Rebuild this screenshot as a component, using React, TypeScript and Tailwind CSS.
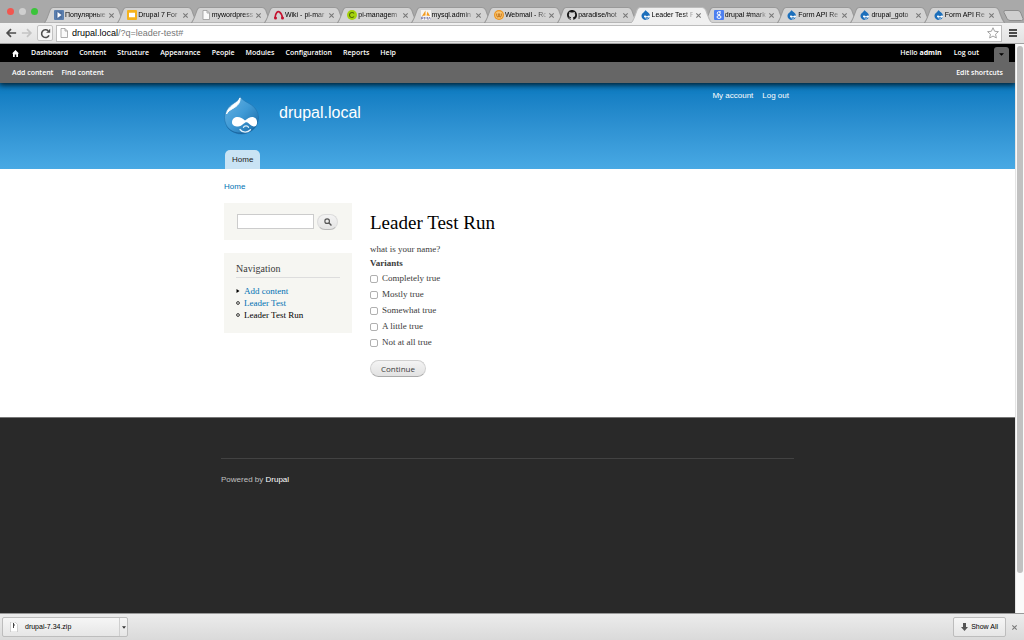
import type { ReactNode } from "react";

const sans = "font-['Liberation_Sans',Arial,sans-serif]";
const serif = "font-['Liberation_Serif',Georgia,serif]";
const lucida = "font-['Open_Sans','Noto_Sans',sans-serif]";

function DropFavicon() {
  return (
    <svg viewBox="0 0 20 20" className="size-[10px]">
      <path d="M9 0c1 3 9 5 9 12a8.500 8 0 0 1-17 0C1 6 8 4 9 0z" fill="#1c6fbb" />
      <path d="M6 13c0-3 4-2 6 0 2-2 6-3 6 0s-4 3-6 1c-2 2-6 2-6-1z" fill="#fff" />
      <path d="M9 17.500q3 1.500 5 0" stroke="#fff" strokeWidth="1.500" fill="none" />
    </svg>
  );
}

function PageIcon() {
  return (
    <svg viewBox="0 0 20 20" className="size-[10px]">
      <path d="M4 1h8l5 5v13H4z" fill="#fafafa" stroke="#9a9a9a" strokeWidth="1.6" />
      <path d="M12 1v5h5" fill="none" stroke="#9a9a9a" strokeWidth="1.6" />
    </svg>
  );
}

const icons: Record<string, ReactNode> = {
  video: (
    <svg viewBox="0 0 20 20" className="size-[10px]">
      <rect width="20" height="20" rx="2" fill="#5b7fae" />
      <rect x="4" y="3" width="12" height="14" fill="#4d6f9e" />
      <path d="M7 4l8 6-8 6z" fill="#fff" />
    </svg>
  ),
  slides: (
    <svg viewBox="0 0 20 20" className="size-[10px]">
      <rect width="20" height="20" rx="2" fill="#f5b21b" />
      <rect x="4" y="5.5" width="12" height="9" fill="#fff" />
    </svg>
  ),
  page: <PageIcon />,
  wiki: (
    <svg viewBox="0 0 20 20" className="size-[10px]">
      <path d="M2 16C3 4 8 2 11 4s5 6 6 12" fill="none" stroke="#c4122f" strokeWidth="3.2" />
      <circle cx="3" cy="16" r="3" fill="#c4122f" />
      <circle cx="17" cy="16" r="3" fill="#c4122f" />
    </svg>
  ),
  pi: (
    <svg viewBox="0 0 20 20" className="size-[10px]">
      <circle cx="10" cy="10" r="10" fill="#a5d20d" />
      <path d="M14 7a5 5 0 1 0 0 6" fill="none" stroke="#4f6a05" strokeWidth="2.2" />
    </svg>
  ),
  mysql: (
    <svg viewBox="0 0 20 20" className="size-[10px]">
      <rect width="20" height="20" fill="#f6f4f2" />
      <path d="M2 12l7-11v10zM11 11l2-8 5 9z" fill="#f39a1e" />
      <path d="M1 19v-5h3v3H1M7 19v-5l3 3 3-3v5M15 19l2-5 2 5" fill="none" stroke="#6b6fa8" strokeWidth="1.4" />
    </svg>
  ),
  mail: (
    <svg viewBox="0 0 20 20" className="size-[10px]">
      <circle cx="10" cy="10" r="10" fill="#ec951f" />
      <circle cx="10" cy="10" r="7.500" fill="#f9c674" />
      <path d="M5.500 7v4q0 3 2.300 3t2.200-3V7v4q0 3 2.300 3t2.200-3V7" fill="none" stroke="#b8650a" strokeWidth="1.8" />
    </svg>
  ),
  octocat: (
    <svg viewBox="0 0 16 16" className="size-[10px]">
      <path
        d="M8 0C3.58 0 0 3.58 0 8c0 3.54 2.29 6.53 5.47 7.59.4.07.55-.17.55-.38v-1.49c-2.01.37-2.53-.49-2.69-.94-.09-.23-.48-.94-.82-1.13-.28-.15-.68-.52-.01-.53.63-.01 1.08.58 1.23.82.72 1.21 1.87.87 2.33.66.07-.52.28-.87.51-1.07-1.78-.2-3.64-.89-3.64-3.95 0-.87.31-1.59.82-2.15-.08-.2-.36-1.02.08-2.12 0 0 .67-.21 2.2.82a7.6 7.6 0 0 1 4 0c1.53-1.04 2.2-.82 2.2-.82.44 1.1.16 1.92.08 2.12.51.56.82 1.27.82 2.15 0 3.07-1.87 3.75-3.65 3.95.29.25.54.73.54 1.48v2.2c0 .21.15.46.55.38A8 8 0 0 0 16 8c0-4.42-3.58-8-8-8z"
        fill="#151515"
      />
    </svg>
  ),
  drop: <DropFavicon />,
  search: (
    <svg viewBox="0 0 20 20" className="size-[10px]">
      <rect width="20" height="20" rx="2" fill="#4c7ff0" />
      <circle cx="9.5" cy="6.5" r="3" fill="none" stroke="#fff" strokeWidth="2" />
      <ellipse cx="10" cy="14" rx="4" ry="2.8" fill="none" stroke="#fff" strokeWidth="2" />
      <path d="M10 3.500h4M10 9l1 3" stroke="#fff" strokeWidth="1.600" />
    </svg>
  ),
};

const tabs = [
  { icon: "video", title: "Популярные" },
  { icon: "slides", title: "Drupal 7 For" },
  { icon: "page", title: "mywordpress" },
  { icon: "wiki", title: "Wiki - pi-mar" },
  { icon: "pi", title: "pi-managem" },
  { icon: "mysql", title: "mysql.admin" },
  { icon: "mail", title: "Webmail - Ro" },
  { icon: "octocat", title: "paradise/hot" },
  { icon: "drop", title: "Leader Test F", active: true },
  { icon: "search", title: "drupal #mark" },
  { icon: "drop", title: "Form API Re" },
  { icon: "drop", title: "drupal_goto" },
  { icon: "drop", title: "Form API Re" },
];

function CloseIcon() {
  return (
    <svg viewBox="0 0 8 8" className="size-[7px]">
      <path d="M1.500 1.500l5 5M6.500 1.500l-5 5" stroke="#777" strokeWidth="1.200" />
    </svg>
  );
}

function BrowserTab({ icon, title, active }: { icon: string; title: string; active?: boolean }) {
  return (
    <div className={`relative flex h-4 min-w-0 flex-1 items-center ${active ? "z-10" : ""}`}>
      <svg
        viewBox="0 0 80 16"
        preserveAspectRatio="none"
        className="absolute inset-y-0 -left-1 h-4 w-[calc(100%+8px)]"
      >
        <path
          d="M0 16C2 15 2.500 13 6 3Q7 .5 9 .5H70Q72 .5 73.500 3C77 13 78 15 80 16z"
          fill={active ? "#f0f0f0" : "#d3d3d3"}
          stroke={active ? "#bcbcbc" : "#999"}
          strokeWidth="1"
        />
        {active && <path d="M1 16H79" stroke="#f0f0f0" strokeWidth="2" />}
      </svg>
      <a href="#" className="relative ml-1.5 flex min-w-0 flex-1 items-center gap-px">
        <span className="shrink-0">{icons[icon]}</span>
        <span className="min-w-0 flex-1 text-[7px] leading-3 whitespace-nowrap text-black [mask-image:linear-gradient(to_right,black_75%,rgba(0,0,0,0.2))]">
          {title}
        </span>
      </a>
      <button aria-label="Close tab" className="relative mr-1.5 ml-0.5 shrink-0">
        <CloseIcon />
      </button>
    </div>
  );
}

function BrowserChrome() {
  return (
    <div className={sans}>
      <div className="flex h-[23px] items-end bg-[#a9a9a9] pt-[7px]">
        <div className="mb-2 ml-[7px] flex w-[41px] shrink-0 gap-[5px]">
          <span className="size-[7px] rounded-full bg-[#f2564f]" />
          <span className="size-[7px] rounded-full bg-[#cfcfcf]" />
          <span className="size-[7px] rounded-full bg-[#3ac43a]" />
        </div>
        <div className="flex min-w-0 flex-1">
          {tabs.map((t, i) => (
            <BrowserTab key={i} {...t} />
          ))}
        </div>
        <button aria-label="New tab" className="mb-0.5 ml-0.5 w-[21px] shrink-0">
          <svg viewBox="0 0 21 11" className="h-[11px] w-[21px]">
            <path d="M2 .5h13q2 0 3 3l2 5q.5 2-1.500 2H7q-2 0-3-2L1 2.500Q.5.5 2 .5z" fill="#cfcfcf" stroke="#8c8c8c" />
          </svg>
        </button>
      </div>
      <div className="flex h-[21px] items-center border-b border-[#a0a0a0] bg-linear-to-b from-[#f0f0f0] to-[#e2e2e2] pr-[7px] pl-[5px]">
        <button aria-label="Back" className="w-4">
          <svg viewBox="0 0 14 14" className="size-3">
            <path d="M13 7H3M7 2.500L2.500 7 7 11.500" fill="none" stroke="#4d4d4d" strokeWidth="2" />
          </svg>
        </button>
        <button aria-label="Forward" className="w-4">
          <svg viewBox="0 0 14 14" className="size-3">
            <path d="M1 7h10M7 2.500L11.500 7 7 11.500" fill="none" stroke="#c3c3c3" strokeWidth="2" />
          </svg>
        </button>
        <button
          aria-label="Reload"
          className="flex h-4 w-4 items-center justify-center rounded-[2px] border border-[#c2c2c2] bg-[#f5f5f5]"
        >
          <svg viewBox="0 0 14 14" className="size-[11px]">
            <path d="M11.500 9.500A5 5 0 1 1 10.500 3.500" fill="none" stroke="#4d4d4d" strokeWidth="2" />
            <path d="M13 .8V6H7.800z" fill="#4d4d4d" />
          </svg>
        </button>
        <div className="ml-[3px] flex h-[17px] min-w-0 flex-1 items-center border border-[#bdbdbd] bg-white pr-0.5 pl-0.5">
          <PageIcon />
          <div className="ml-[3px] flex-1 text-[9px] leading-3 text-[#777]">
            <span className="text-black">drupal.local</span>/?q=leader-test#
          </div>
          <button aria-label="Bookmark">
            <svg viewBox="0 0 24 24" className="size-3">
              <path
                d="M12 1.500l3.200 7 7.600.8-5.700 5.100 1.600 7.500L12 18.100l-6.700 3.800 1.600-7.500L1.200 9.300l7.600-.8z"
                fill="#fff"
                stroke="#999"
                strokeWidth="1.800"
              />
            </svg>
          </button>
        </div>
        <button aria-label="Menu" className="ml-[7px] flex flex-col gap-px">
          <span className="h-0.5 w-2 bg-[#4a4a4a]" />
          <span className="h-0.5 w-2 bg-[#4a4a4a]" />
          <span className="h-0.5 w-2 bg-[#4a4a4a]" />
        </button>
      </div>
    </div>
  );
}

const adminLinks = [
  "Dashboard",
  "Content",
  "Structure",
  "Appearance",
  "People",
  "Modules",
  "Configuration",
  "Reports",
  "Help",
];

function AdminToolbar() {
  return (
    <nav className={`relative text-[7px] leading-[10px] font-semibold text-white ${lucida}`}>
      <div className="flex h-[18px] items-center bg-black pl-3">
        <a href="#" aria-label="Home" className="mr-3">
          <svg viewBox="0 0 14 14" className="size-[7px]">
            <path d="M7 0L0 7h2v7h3.500V9h3v5H12V7h2z" fill="#fff" />
          </svg>
        </a>
        <div className="flex flex-1 gap-[11px]">
          {adminLinks.map((l) => (
            <a key={l} href="#">
              {l}
            </a>
          ))}
        </div>
        <div className="flex gap-3">
          <a href="#">
            Hello <span className="font-bold">admin</span>
          </a>
          <a href="#">Log out</a>
        </div>
        <button
          aria-label="Toggle shortcuts"
          className="mr-1.5 ml-[15px] flex h-[15px] w-[15px] items-center justify-center self-end rounded-t-[3px] bg-[#666]"
        >
          <svg viewBox="0 0 6 3" className="h-[3px] w-[5px]">
            <path d="M0 0h6L3 3z" fill="#000" />
          </svg>
        </button>
      </div>
      <div className="flex h-[21px] items-center justify-between bg-[#666] pr-3 pl-3 shadow-[0_1px_6px_1px_rgba(0,0,0,0.8)]">
        <div className="flex gap-2">
          <a href="#">Add content</a>
          <a href="#">Find content</a>
        </div>
        <a href="#">Edit shortcuts</a>
      </div>
    </nav>
  );
}

function Druplicon() {
  return (
    <svg viewBox="0 0 36 40" className="h-10 w-9">
      <defs>
        <linearGradient id="body" x1="0" y1="0" x2="1" y2="1">
          <stop offset="0" stopColor="#6bb4e2" />
          <stop offset=".5" stopColor="#3f9ad6" />
          <stop offset="1" stopColor="#1767a3" />
        </linearGradient>
      </defs>
      <path
        d="M16 .5c1.500 4.500 6 6 10 8.500 5 3 8.500 8 8.500 13.500C34.500 32 27 39 17.500 39S.5 32 .5 22.500C.5 16 4 11.500 8.500 8.500c3.500-2.300 6.500-4 7.500-8z"
        fill="url(#body)"
        stroke="#2377b3"
        strokeWidth=".7"
      />
      <path d="M34 20c1 9-6 17-16 17.500C11 38 5 35 2 30c2 5.500 8.500 9 15.500 9C27 39 36 31 34 20z" fill="#145d95" opacity=".7" />
      <path d="M16 3c.3 4-1.500 7-5.500 9.500C7 14.500 4 16 2.500 19c.5-4 3.500-7 7-9.500C12.500 7.500 15 6 16 3z" fill="#fff" stroke="#fff" strokeWidth="1" />
      <path
        d="M8 27.500C8 23.800 10.800 22 13.500 22c3 0 5 1.500 7.500 3.500 2.500-2 5.500-4 8-3.500 3 .6 4.500 3.500 4 6.500-.4 2.500-2 3.500-4 2.800-2.500-.8-4.500-3.300-6-4-1.500-.3-2 .3-3.500 1.500-1.600 1.500-3.500 2.700-5.500 2.700-3.500 0-6-1.500-6-4z"
        fill="#fff"
      />
      <path
        d="M19.500 32.300c.8-1.800 4.200-2 5 0M16 34.500c2.500 3.500 7.500 3.500 10.500.3"
        fill="none"
        stroke="#e3f2fb"
        strokeWidth="1.300"
        strokeLinecap="round"
      />
    </svg>
  );
}

function SiteHeader() {
  return (
    <header className={`bg-linear-to-b from-[#0779bf] to-[#48a9e4] ${sans}`}>
      <div className="mx-auto max-w-[573px]">
        <div className="flex h-[67px] items-start px-[3px] pr-[5px]">
          <a href="#" aria-label="Site home" className="mt-3">
            <Druplicon />
          </a>
          <h1 className="mt-5 ml-[19px] flex-1 text-[16px] leading-5 text-white">
            <a href="#">drupal.local</a>
          </h1>
          <div className="mt-[7px] flex gap-[9px] text-[8px] leading-[11px] text-white">
            <a href="#">My account</a>
            <a href="#">Log out</a>
          </div>
        </div>
        <div className="flex pl-1">
          <a href="#" className="rounded-t-[5px] bg-[#c9e3f4] px-[7px] pt-1 pb-[3px] text-[8px] leading-3 text-[#222]">
            Home
          </a>
        </div>
      </div>
    </header>
  );
}

function NavItem({ marker, children, current }: { marker: "arrow" | "ring"; children: string; current?: boolean }) {
  return (
    <li className="flex items-center gap-1">
      <svg viewBox="0 0 8 8" className="size-1">
        {marker === "arrow" ? (
          <path d="M1 0l6 4-6 4z" fill="#000" />
        ) : (
          <circle cx="4" cy="4" r="2.800" fill="none" stroke="#222" strokeWidth="1.800" />
        )}
      </svg>
      <a href="#" className={current ? "text-black" : "text-[#0071b3]"}>
        {children}
      </a>
    </li>
  );
}

const variants = ["Completely true", "Mostly true", "Somewhat true", "A little true", "Not at all true"];

function MainContent() {
  return (
    <div className="mx-auto w-full max-w-[573px] px-[3px] pb-10">
      <div className={`pt-3 text-[8px] leading-3 ${sans}`}>
        <a href="#" className="text-[#0071b3]">
          Home
        </a>
      </div>
      <div className={`mt-[10px] flex items-start gap-[18px] text-[9px] text-[#3b3b3b] ${serif}`}>
        <aside className="flex w-32 shrink-0 flex-col gap-[13px]">
          <form className="flex h-[37px] items-center gap-[3px] bg-[#f6f6f2] px-[13px]">
            <input
              type="search"
              aria-label="Search"
              className="h-[15px] w-[77px] border border-[#ccc] bg-white px-1 outline-none"
            />
            <button
              type="button"
              aria-label="Search"
              className="flex h-4 w-[21px] items-center justify-center rounded-full border border-[#dcdcdc] border-b-[#b9b9b9] bg-linear-to-b from-[#f4f4f4] to-[#e4e4e4]"
            >
              <svg viewBox="0 0 14 14" className="size-2">
                <circle cx="5.500" cy="5.500" r="4" fill="none" stroke="#555" strokeWidth="2" />
                <path d="M8.500 8.500L13 13" stroke="#555" strokeWidth="2.400" />
              </svg>
            </button>
          </form>
          <section className="bg-[#f6f6f2] px-3 pt-[9px] pb-3">
            <h2 className="border-b border-[#ddd] pb-0.5 text-[10px] leading-[13px]">Navigation</h2>
            <ul className="mt-[7px] leading-[12px]">
              <NavItem marker="arrow">Add content</NavItem>
              <NavItem marker="ring">Leader Test</NavItem>
              <NavItem marker="ring" current>
                Leader Test Run
              </NavItem>
            </ul>
          </section>
        </aside>
        <main className="min-w-0 flex-1 pt-2">
          <h1 className="text-[19px] leading-6 text-black">Leader Test Run</h1>
          <form className="mt-2">
            <p className="leading-[13px]">what is your name?</p>
            <fieldset>
              <legend className="leading-[14px] font-bold">Variants</legend>
              <div className="mt-0.5 flex flex-col gap-1">
                {variants.map((v) => (
                  <label key={v} className="flex items-center gap-1 leading-3">
                    <input
                      type="checkbox"
                      className="mt-px size-2 appearance-none rounded-[2px] border border-[#b0b0b0] bg-white checked:bg-[#0071b3]"
                    />
                    {v}
                  </label>
                ))}
              </div>
            </fieldset>
            <button
              type="button"
              className={`mt-3 block h-[17px] rounded-full border border-[#d0d0d0] border-b-[#aaa] bg-linear-to-b from-[#f4f4f4] to-[#e2e2e2] px-[10px] text-[8px] leading-3 text-[#3a3a3a] ${lucida}`}
            >
              Continue
            </button>
          </form>
        </main>
      </div>
    </div>
  );
}

function DownloadBar() {
  return (
    <div
      className={`flex h-[27px] shrink-0 items-center border-t border-[#999] bg-linear-to-b from-[#ececec] to-[#dadada] pr-1.5 pl-0.5 text-[7px] text-black ${sans}`}
    >
      <div className="flex h-5 w-[126px] items-stretch rounded-[2px] border border-[#bdbdbd] bg-linear-to-b from-[#f6f6f6] to-[#e6e6e6]">
        <button className="flex flex-1 items-center gap-1.5 pl-1.5">
          <svg viewBox="0 0 20 20" className="size-[10px]">
            <path d="M3 0h9l5 5v15H3z" fill="#fff" stroke="#aaa" strokeWidth="1" />
            <path d="M9 2v10M9 6h3" stroke="#444" strokeWidth="2" />
          </svg>
          drupal-7.34.zip
        </button>
        <button aria-label="Download options" className="flex w-2 items-center justify-center border-l border-[#cfcfcf]">
          <svg viewBox="0 0 6 4" className="h-[3px] w-1">
            <path d="M0 0h6L3 4z" fill="#333" />
          </svg>
        </button>
      </div>
      <div className="flex-1" />
      <button className="flex h-5 items-center gap-[3px] rounded-[2px] border border-[#bdbdbd] bg-linear-to-b from-[#f6f6f6] to-[#e6e6e6] px-[7px]">
        <svg viewBox="0 0 14 16" className="h-2 w-[7px]">
          <path d="M4 0h6v8h4l-7 8-7-8h4z" fill="#555" />
        </svg>
        Show All
      </button>
      <button aria-label="Close downloads" className="ml-[5px]">
        <CloseIcon />
      </button>
    </div>
  );
}

export default function App() {
  return (
    <div className="flex h-screen flex-col overflow-hidden">
      <BrowserChrome />
      <div className="flex min-h-0 flex-1">
        <div className="flex min-w-0 flex-1 flex-col overflow-hidden bg-white">
          <AdminToolbar />
          <SiteHeader />
          <MainContent />
          <footer className={`flex-1 border-t border-[#777] bg-[#292929] text-[8px] leading-3 text-[#c0c0c0] ${sans}`}>
            <div className="mx-auto mt-10 max-w-[573px] border-t border-[#424242] pt-[15px]">
              Powered by{" "}
              <a href="#" className="text-white">
                Drupal
              </a>
            </div>
          </footer>
        </div>
        <div className="w-[9px] shrink-0 border-l border-[#e4e4e4] bg-[#fafafa] pt-[2px] pl-px">
          <div className="h-[93%] w-[6px] rounded-full bg-[#c1c1c1]" />
        </div>
      </div>
      <DownloadBar />
    </div>
  );
}
